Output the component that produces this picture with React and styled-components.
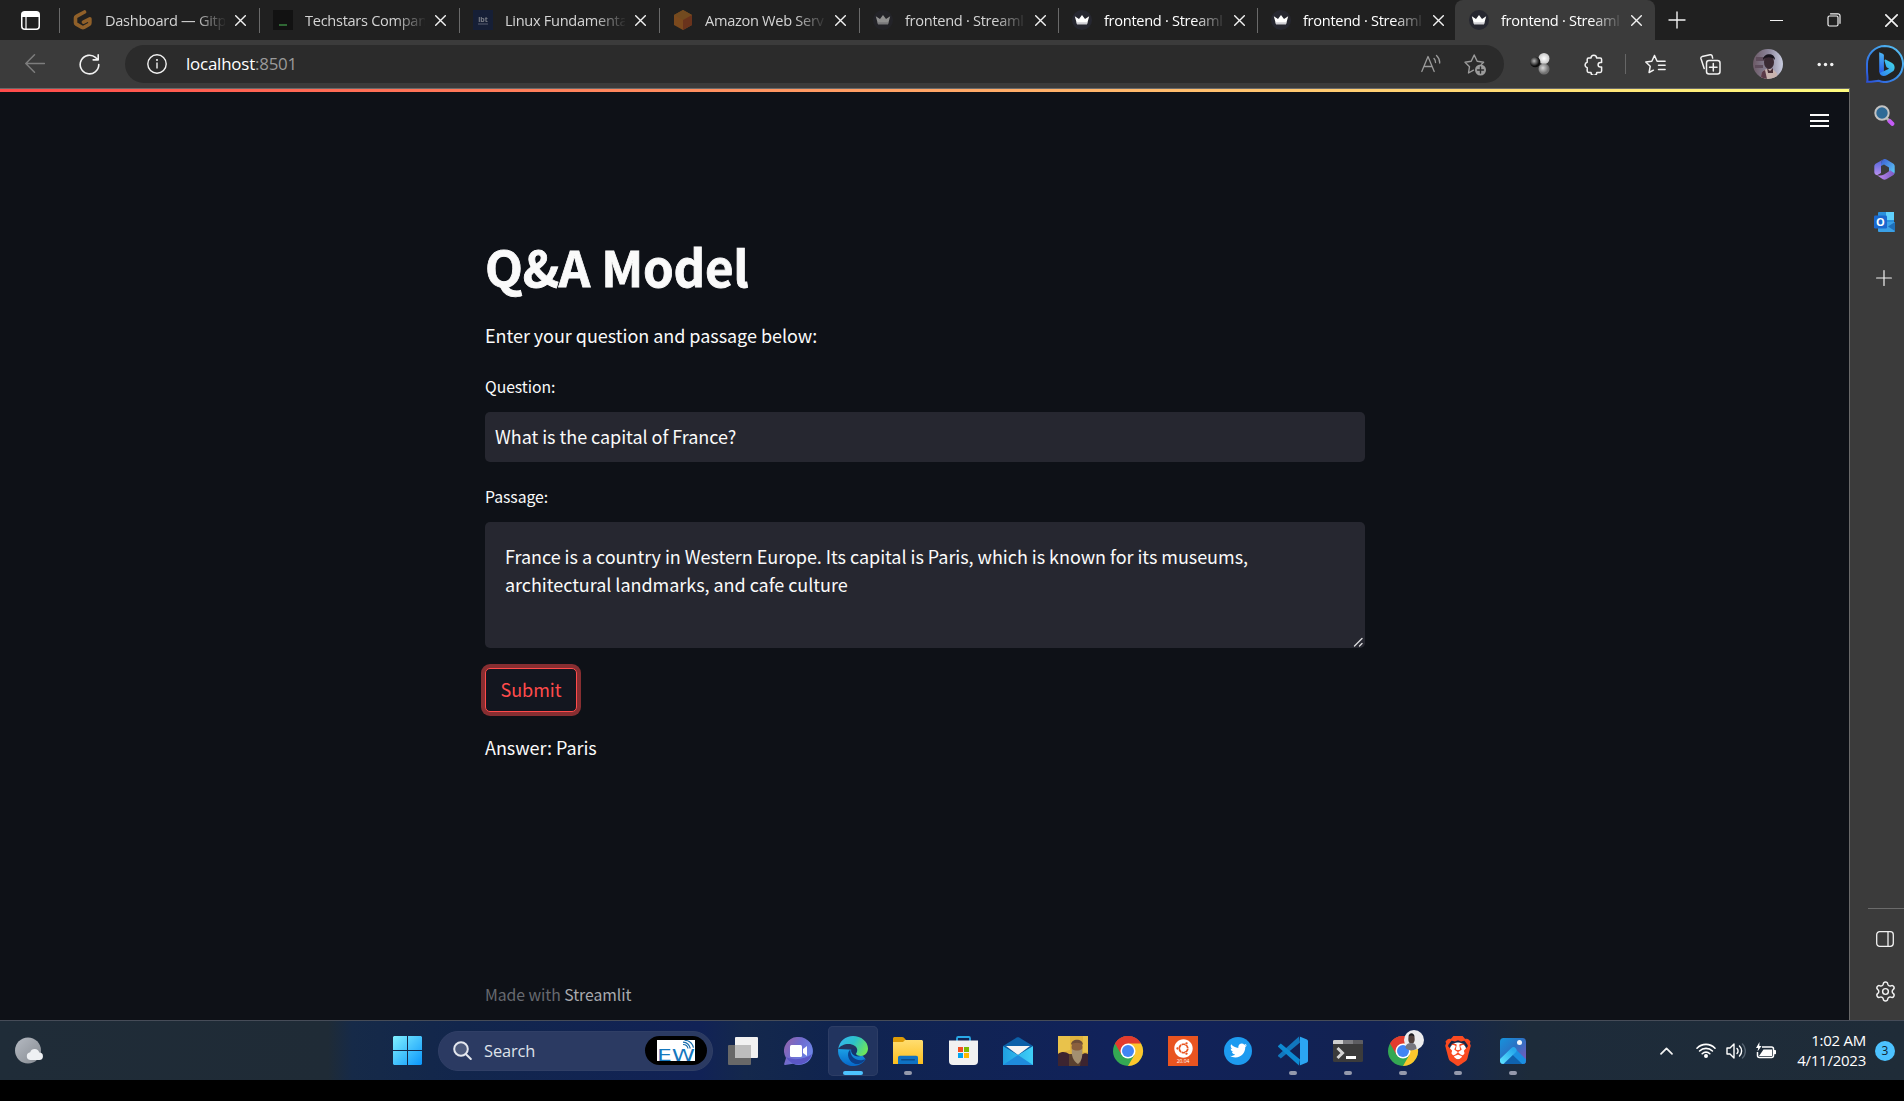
import React from "react";
import styled, { createGlobalStyle, css } from "styled-components";
import { Settings } from "lucide-react";
import { FaTwitter, FaUbuntu } from "react-icons/fa";
import { SiBrave } from "react-icons/si";

const GlobalStyle = createGlobalStyle`
  *, *::before, *::after { box-sizing: border-box; }
  html, body { margin: 0; background: #000; overflow: hidden; }
  svg { display: block; flex: none; }
`;

const uiFont = `"Open Sans", "Noto Sans", sans-serif`;
const pageFont = `"Noto Sans CJK SC", "Open Sans", sans-serif`;

const Desktop = styled.div`
  width: 1904px;
  height: 1101px;
  display: flex;
  flex-direction: column;
  background: #000;
  font-family: ${uiFont};
  overflow: hidden;
`;

/* ---------- Tab strip ---------- */
const TabStrip = styled.header`
  height: 40px;
  flex: none;
  display: flex;
  align-items: stretch;
  background: #202020;
  color: #fff;
`;
const TabActions = styled.div`
  width: 59px;
  flex: none;
  display: flex;
  align-items: center;
  justify-content: center;
  padding-left: 1px;
`;
const Tab = styled.div`
  width: ${(p) => (p.$narrow ? 199 : 200)}px;
  flex: none;
  display: flex;
  align-items: center;
  padding-left: 13px;
  border-radius: ${(p) => (p.$active ? "8px 8px 0 0" : 0)};
  background: ${(p) =>
    p.$active ? "#3b3b3b" : "linear-gradient(#6a6a6a, #6a6a6a) left 8px / 1px 25px no-repeat"};
  ${(p) =>
    p.$active &&
    css`
      margin-left: -1px;
    `}
`;
const TabIcon = styled.span`
  width: 20px;
  height: 20px;
  margin-left: 1px;
  opacity: ${(p) => (p.$dim ? 0.5 : 1)};
`;
const TabTitle = styled.span`
  width: 120px;
  margin-left: 12px;
  padding-bottom: 1px;
  font-size: 14.6px;
  letter-spacing: -0.3px;
  line-height: 20px;
  white-space: nowrap;
  color: ${(p) => (p.$dim ? "#d4d4d4" : "#fff")};
  mask-image: linear-gradient(90deg, #000 90px, transparent 122px);
`;
const TabClose = styled.span`
  margin-left: 10px;
  padding-top: 1px;
`;
const NewTab = styled.div`
  width: 44px;
  display: flex;
  align-items: center;
  justify-content: center;
`;
const WindowButtons = styled.div`
  margin-left: auto;
  display: flex;
`;
const WindowButton = styled.div`
  width: 57px;
  display: flex;
  align-items: center;
  justify-content: center;
  &:last-child {
    width: 58px;
    margin-right: -16px;
  }
`;

/* ---------- Toolbar ---------- */
const Toolbar = styled.div`
  height: 48px;
  flex: none;
  display: flex;
  align-items: center;
  background: #3b3b3b;
`;
const NavButton = styled.div`
  width: 55px;
  display: flex;
  justify-content: center;
`;
const NavButtons = styled.div`
  display: flex;
  flex: none;
  width: 125px;
  padding-left: 7px;
`;
const AddressBar = styled.div`
  width: 1379px;
  flex: none;
  height: 38px;
  border-radius: 19px;
  background: #2b2b2b;
  display: flex;
  align-items: center;
  padding: 0 17px 0 22px;
`;
const Url = styled.span`
  margin-left: 19px;
  font-size: 16.9px;
  letter-spacing: -0.2px;
  color: #fff;
  line-height: 24px;
  span {
    color: #9a9a9a;
  }
`;
const AddressActions = styled.div`
  margin-left: auto;
  display: flex;
  align-items: center;
  gap: 23px;
`;
const ToolbarActions = styled.div`
  flex: none;
  display: flex;
  align-items: center;
`;
const ToolbarSlot = styled.div`
  width: ${(p) => p.$w}px;
  flex: none;
  display: flex;
  justify-content: center;
`;
const ToolbarDivider = styled.div`
  width: 1px;
  height: 20px;
  background: #666;
`;

/* ---------- Body ---------- */
const BrowserBody = styled.div`
  height: 932px;
  flex: none;
  display: flex;
  background: #3b3b3b;
`;
const Page = styled.main`
  width: 1850px;
  background: #0e1117;
  border-top: 1px solid #696969;
  border-right: 1px solid #696969;
  display: flex;
  flex-direction: column;
  font-family: ${pageFont};
  letter-spacing: -0.04px;
  color: #fafafa;
`;
const Decoration = styled.div`
  height: 3px;
  flex: none;
  background: linear-gradient(90deg, #ff4b4b, #fffd80);
`;
const PageHeader = styled.div`
  height: 56px;
  flex: none;
  display: flex;
  justify-content: flex-end;
  padding: 22px 20px 0 0;
`;
const Menu = styled.div`
  width: 19px;
  height: 13px;
  border-top: 2px solid #fafafa;
  border-bottom: 2px solid #fafafa;
  display: flex;
  align-items: center;
  &::before {
    content: "";
    width: 19px;
    height: 2px;
    background: #fafafa;
  }
`;
const Block = styled.section`
  width: 880px;
  flex: 1;
  margin-left: 485px;
  padding-top: 85px;
  display: flex;
  flex-direction: column;
  align-items: stretch;
`;
const Title = styled.h1`
  margin: 0;
  font-size: 49.2px;
  line-height: 66px;
  font-weight: 700;
  letter-spacing: -0.2px;
  -webkit-text-stroke: 0.8px #fafafa;
`;
const Text = styled.p`
  margin: ${(p) => p.$mt}px 0 0;
  font-size: 18px;
  line-height: 28px;
`;
const Label = styled.label`
  margin-top: ${(p) => p.$mt}px;
  font-size: 15.75px;
  line-height: 24px;
`;
const Input = styled.input`
  margin: 13px 0 0;
  height: 50px;
  border: 0;
  outline: 0;
  border-radius: 5px;
  background: #262730;
  color: #fafafa;
  font: 18px/28px ${pageFont};
  letter-spacing: -0.04px;
  padding: 0 10px 2px;
`;
const AreaBox = styled.div`
  position: relative;
  margin-top: 13px;
  height: 126px;
  > svg {
    position: absolute;
    right: 2px;
    bottom: 1px;
  }
`;
const Area = styled.textarea`
  display: block;
  width: 880px;
  height: 126px;
  border: 0;
  outline: 0;
  resize: none;
  overflow: hidden;
  border-radius: 5px;
  background: #262730;
  color: #fafafa;
  font: 18px/28px ${pageFont};
  letter-spacing: -0.04px;
  padding: 20px;
`;
const Submit = styled.button`
  align-self: flex-start;
  margin-top: 20px;
  width: 92px;
  height: 44px;
  padding: 0 0 3px;
  border: 1px solid #ff4b4b;
  border-radius: 5px;
  background: #13161f;
  box-shadow: 0 0 0 4px rgba(255, 75, 75, 0.5);
  color: #ff4b4b;
  font: 18px/28px ${pageFont};
`;
const Footer = styled.footer`
  margin-top: auto;
  padding-bottom: 13px;
  font-size: 15.75px;
  line-height: 24px;
  color: #676a70;
  span {
    color: #a9abaf;
  }
`;

/* ---------- Side bar ---------- */
const SideBar = styled.aside`
  flex: 1;
  padding: 14px 0 3px 15px;
  display: flex;
  flex-direction: column;
`;
const SideSlot = styled.div`
  height: ${(p) => p.$h || 54}px;
  width: 38px;
  display: flex;
  align-items: center;
  justify-content: center;
`;
const SideBottom = styled.div`
  margin-top: auto;
  margin-left: 3px;
  border-top: 1px solid #6b6b6b;
  padding-top: 4px;
  > div {
    width: 34px;
  }
`;

/* ---------- Taskbar ---------- */
const Taskbar = styled.nav`
  height: 60px;
  flex: none;
  display: flex;
  align-items: center;
  border-top: 1px solid #464c58;
  background: linear-gradient(
    90deg,
    #1f2c38 0,
    #1f2b36 328px,
    #162a48 352px,
    #12264c 460px,
    #112256 700px,
    #14284c 745px,
    #10244f 830px,
    #11225a 1110px,
    #122252 1380px,
    #14264d 1440px,
    #1d2b3a 1530px,
    #1f2c38 1904px
  );
  color: #fff;
`;
const Weather = styled.div`
  width: 393px;
  padding-left: 15px;
`;
const SearchBox = styled.div`
  width: 275px;
  height: 40px;
  margin: 0 5px 0 16px;
  padding: 0 5px 0 14px;
  border-radius: 20px;
  background: #2b3a62;
  border: 1px solid #303f66;
  display: flex;
  align-items: center;
`;
const SearchLabel = styled.span`
  margin-left: 12px;
  font-size: 16.4px;
  letter-spacing: -0.1px;
  line-height: 24px;
  color: #dfe2ea;
`;
const SearchBadge = styled.div`
  margin-left: auto;
  width: 62px;
  height: 29px;
  border-radius: 15px;
  background: #000;
  display: flex;
  align-items: center;
  justify-content: center;
`;
const Apps = styled.div`
  display: flex;
  gap: 5px;
`;
const AppButton = styled.div`
  position: relative;
  width: 50px;
  height: 50px;
  border-radius: 5px;
  display: flex;
  align-items: center;
  justify-content: center;
  background: ${(p) => (p.$active ? "#22345f" : "transparent")};
  box-shadow: ${(p) => (p.$active ? "inset 0 0 0 1px #2d3d65" : "none")};
  &::after {
    content: "";
    position: absolute;
    bottom: 1px;
    left: 50%;
    display: ${(p) => (p.$active || p.$running ? "block" : "none")};
    width: ${(p) => (p.$active ? 20 : 8)}px;
    height: 4px;
    transform: translateX(-50%);
    border-radius: 2px;
    background: ${(p) => (p.$active ? "#4cc2ff" : "#9499ac")};
  }
`;
const Tray = styled.div`
  margin-left: auto;
  padding-right: 9px;
  display: flex;
  align-items: center;
`;
const TraySlot = styled.div`
  width: ${(p) => p.$w}px;
  display: flex;
  justify-content: center;
`;
const Clock = styled.div`
  width: 79px;
  text-align: right;
  font-size: 15px;
  letter-spacing: -0.25px;
  line-height: 20px;
  padding-bottom: 1px;
`;
const Badge = styled.div`
  margin-left: 9px;
  width: 20px;
  height: 20px;
  border-radius: 50%;
  background: #4cc2ff;
  color: #10242f;
  font-size: 12px;
  line-height: 19px;
  text-align: center;
`;

/* ---------- Icons ---------- */
const Line = ({ w = 20, h, c = "#f2f2f2", sw = 1.5, vb = "0 0 20 20", children }) => (
  <svg width={w} height={h || w} viewBox={vb} fill="none" stroke={c} strokeWidth={sw} strokeLinecap="round" strokeLinejoin="round">
    {children}
  </svg>
);

const Cross = ({ size = 11 }) => (
  <Line w={size} vb="0 0 11 11" sw={1.4}>
    <path d="M.7.7l9.6 9.6M10.3.7L.7 10.3" />
  </Line>
);

const GitpodIcon = () => (
  <svg width="20" height="20" viewBox="0 0 20 20" fill="none" stroke="#ffa033" strokeWidth="3.6" strokeLinejoin="round" strokeLinecap="round">
    <path d="M11.5 2L3.4 6.300c-.6.3-.9.8-.9 1.400v5c0 .6.3 1.100.8 1.400l5.700 3.300c.6.3 1.300.3 1.900 0l5.100-2.900c.6-.4.9-.9.9-1.500V8.800l-6.400 3.400" />
  </svg>
);
const TerminalFav = () => (
  <svg width="20" height="20" viewBox="0 0 20 20">
    <rect width="20" height="20" fill="#060606" />
    <rect x="6" y="14" width="8" height="2" fill="#3fae49" />
  </svg>
);
const IbtFav = () => (
  <svg width="20" height="20" viewBox="0 0 20 20">
    <rect width="20" height="20" fill="#0e1f4d" />
    <text x="10" y="12" textAnchor="middle" fontFamily="Open Sans" fontWeight="700" fontSize="7" fill="#cfd6e8">ibt</text>
    <rect x="5" y="13.500" width="10" height="1" fill="#8f9cc0" />
  </svg>
);
const AwsFav = () => (
  <svg width="20" height="20" viewBox="0 0 20 20">
    <path d="M10 0l9 5v10l-9 5-9-5V5z" fill="#d6721c" />
    <path d="M10 0l9 5-9 5-9-5z" fill="#c4741f" />
    <path d="M19 5v10l-9 5V10z" fill="#b4471a" />
  </svg>
);
const CrownFav = () => (
  <svg width="20" height="20" viewBox="0 0 20 20">
    <circle cx="10" cy="10" r="10" fill="#262730" />
    <path d="M2.800 6.200L7 9l3-4 3 4 4.200-2.800L15 14.300H5z" fill="#fff" />
    <path d="M4.500 12.300h11L15 14.300H5z" fill="#cfcfd4" />
  </svg>
);

const BingIcon = () => (
  <svg width="38" height="38" viewBox="0 0 38 38">
    <defs>
      <linearGradient id="bo" x1="1" y1="0" x2="0" y2="1">
        <stop offset="0" stopColor="#5cc8f5" />
        <stop offset=".5" stopColor="#3a8fe8" />
        <stop offset="1" stopColor="#2a4fd8" />
      </linearGradient>
      <linearGradient id="bs" x1="0" y1="0" x2="0" y2="1">
        <stop offset="0" stopColor="#4cb7f5" />
        <stop offset="1" stopColor="#2458e8" />
      </linearGradient>
      <linearGradient id="bb" x1="1" y1="0" x2="0" y2="1">
        <stop offset="0" stopColor="#45e0e8" />
        <stop offset="1" stopColor="#2d7cf0" />
      </linearGradient>
    </defs>
    <path d="M19 1a18 18 0 1 1-6.500 34.800C9.500 36 5 37 1.200 36.800 2 33 1 29 1 26V19A18 18 0 0 1 19 1z" fill="#232323" stroke="url(#bo)" strokeWidth="2" />
    <path d="M13.200 7.200l3.600 1.500c.7.300 1.100.9 1.100 1.600v15.200l-1 3.500c-2 .8-3.700-.8-3.700-2.800z" fill="url(#bs)" />
    <path d="M19.500 14.500l6.200 3.200c3 1.600 4 5.500 1.700 8.300l-6.300 4c-3 1.800-6.600 1.200-7.500-2l9.500-4.200-1.700-1c-.6-.3-1-.8-1.300-1.500l-1.500-5c-.4-1.200.2-2 .9-1.800z" fill="url(#bb)" />
  </svg>
);
const AvatarIcon = () => (
  <svg width="30" height="30" viewBox="0 0 30 30">
    <defs>
      <clipPath id="av"><circle cx="15" cy="15" r="15" /></clipPath>
      <linearGradient id="avb"><stop offset="0" stopColor="#6c5a66" /><stop offset=".5" stopColor="#8a8398" /><stop offset="1" stopColor="#c9cde0" /></linearGradient>
    </defs>
    <g clipPath="url(#av)">
      <rect width="30" height="30" fill="url(#avb)" />
      <path d="M3 8h9v4H3zM2 16h8v3H2z" fill="#5f4d5c" />
      <path d="M8 30c0-8 3-10 8-10s9 3 9 10z" fill="#c8b3ae" />
      <path d="M8 30c0-6 1-8 4-9l2 9z" fill="#5b3a48" />
      <ellipse cx="16" cy="13" rx="5" ry="7" fill="#3a2a33" />
      <path d="M10 11c0-7 12-8 12 0-2-3-9-4-12 0z" fill="#17131b" />
      <path d="M14 19l3 3 3-3v5h-5z" fill="#4a3038" />
    </g>
  </svg>
);
const BallsIcon = () => (
  <svg width="20" height="22" viewBox="0 0 20 22">
    <defs>
      <radialGradient id="b1"><stop offset="0" stopColor="#fff" /><stop offset="1" stopColor="#c9c9c9" /></radialGradient>
      <radialGradient id="b2" cx=".4" cy=".4"><stop offset="0" stopColor="#b5b5b5" /><stop offset="1" stopColor="#0d0d0d" /></radialGradient>
      <radialGradient id="b3" cx=".4" cy=".4"><stop offset="0" stopColor="#d8d8d8" /><stop offset="1" stopColor="#707070" /></radialGradient>
    </defs>
    <circle cx="14" cy="5.500" r="5.500" fill="url(#b1)" />
    <circle cx="5.200" cy="9" r="5.200" fill="url(#b2)" />
    <circle cx="14" cy="16" r="5.500" fill="url(#b3)" />
  </svg>
);

const SideSearchIcon = () => (
  <svg width="21" height="21" viewBox="0 0 21 21">
    <path d="M15.500 16l2.800 2.800" stroke="#c45cf5" strokeWidth="4.200" strokeLinecap="round" />
    <path d="M12.500 13l2 2" stroke="#b0b0b0" strokeWidth="2.500" />
    <circle cx="8" cy="8" r="6.700" fill="#2f6a96" stroke="#c3c3c3" strokeWidth="2" />
  </svg>
);
const M365Icon = () => (
  <svg width="21" height="21" viewBox="0 0 21 21">
    <defs>
      <linearGradient id="m1" x1="0" y1="0" x2="0" y2="1"><stop offset="0" stopColor="#4b63d8" /><stop offset="1" stopColor="#b88ff0" /></linearGradient>
      <linearGradient id="m2" x1="0" y1="0" x2="1" y2="1"><stop offset="0" stopColor="#3c5bd0" /><stop offset="1" stopColor="#5fd2fb" /></linearGradient>
      <linearGradient id="m3"><stop offset="0" stopColor="#c08af0" /><stop offset="1" stopColor="#7a5bc4" /></linearGradient>
    </defs>
    <path d="M10 0L2 4.600C1 5.200.3 6.200.3 7.300v6c0 1.500 1.200 2.800 2.700 2.900L7 14V5c0-2 1-4 3-5z" fill="url(#m1)" />
    <path d="M10 0c-2 1-3 3-3 5v2l3-1.500 5 3V13l4 2.800c1-.7 1.700-1.500 1.700-2.700v-6c0-1.100-.6-2.100-1.600-2.700L12.500.4C11.700 0 10.800-.1 10 0z" fill="url(#m2)" />
    <path d="M14 13l-4 2.500c-2 1.200-4.500 1.300-7 .7l5.800 4c1 .6 2.400.6 3.500 0l6.800-4c.7-.5 1.200-1.200 1.500-2l-4.600-3z" fill="url(#m3)" />
  </svg>
);
const OutlookIcon = () => (
  <svg width="21" height="21" viewBox="0 0 21 21">
    <rect x="4" y="0" width="16" height="16" rx="1" fill="#2a90dd" />
    <rect x="12" y="0" width="8" height="8" fill="#5fd0fb" />
    <path d="M4 10l17 0v9a1 1 0 0 1-1 1H5a1 1 0 0 1-1-1z" fill="#3aa0e6" />
    <path d="M21 10v9l-7-4.500z" fill="#1f6fb8" />
    <rect x="0" y="3.500" width="13" height="13" rx="1.200" fill="#1a68cf" />
    <text x="6.500" y="14" textAnchor="middle" fontFamily="Open Sans" fontWeight="700" fontSize="11" fill="#fff">O</text>
  </svg>
);

const WeatherIcon = () => (
  <svg width="28" height="27" viewBox="0 0 28 27">
    <defs>
      <linearGradient id="w1" x1="0" y1="0" x2="1" y2="1"><stop offset="0" stopColor="#b5bac2" /><stop offset="1" stopColor="#868b92" /></linearGradient>
    </defs>
    <circle cx="13" cy="13.500" r="13" fill="url(#w1)" />
    <path d="M15 23a3.900 3.900 0 0 1 .2-7.700 4.700 4.700 0 0 1 9 .3A3.700 3.700 0 0 1 24.300 23z" fill="#eef0f3" />
  </svg>
);
const WindowsIcon = () => (
  <svg width="29" height="29" viewBox="0 0 29 29">
    <defs>
      <linearGradient id="win" x1="0" y1="0" x2="1" y2="1"><stop offset="0" stopColor="#80f0ff" /><stop offset="1" stopColor="#0a96fb" /></linearGradient>
    </defs>
    <path d="M1 0h13v14H0V1zM15 0h13l1 1v13H15zM0 15h14v14H1l-1-1zM15 15h14v13l-1 1H15z" fill="url(#win)" />
  </svg>
);
const EwLogo = () => (
  <svg width="38" height="21" viewBox="0 0 38 21">
    <rect width="38" height="21" fill="#fff" />
    <text x="0" y="20.500" fontFamily="DejaVu Sans" fontSize="16" textLength="38" lengthAdjust="spacingAndGlyphs" fill="#1578be">EW</text>
    <path d="M26 4.500a5 5 0 0 1 5 4M26 2.200a8 8 0 0 1 7.300 6.300M27.500.2a10 10 0 0 1 9 7.500" fill="none" stroke="#1a6fae" strokeWidth="1.200" />
  </svg>
);
const TaskViewIcon = () => (
  <svg width="30" height="28" viewBox="0 0 30 28">
    <rect x="0" y="8" width="23" height="20" rx="1" fill="#686868" />
    <rect x="7" y="0" width="23" height="21" rx="1" fill="#f1f1f1" />
    <rect x="7" y="8" width="16" height="13" fill="#bdbdbd" />
  </svg>
);
const ChatIcon = () => (
  <svg width="29" height="28" viewBox="0 0 29 28">
    <defs>
      <linearGradient id="ch" x1="0" y1="0" x2="1" y2=".6"><stop offset="0" stopColor="#9a62a4" /><stop offset=".5" stopColor="#6f6ccf" /><stop offset="1" stopColor="#6d87ea" /></linearGradient>
    </defs>
    <path d="M15 0a14 14 0 1 1-6 26.700L1.200 28c-.7.100-1.300-.5-1-1.200L2 21A14 14 0 0 1 15 0z" fill="url(#ch)" />
    <path d="M2 20a14 14 0 0 0 26-3c-7 5-18 7-26 3z" fill="#5b57c6" />
    <rect x="6" y="8" width="12" height="12" rx="1.500" fill="#fff" />
    <path d="M19 12l4-3v10l-4-3z" fill="#fff" />
  </svg>
);
const EdgeIcon = () => (
  <svg width="30" height="30" viewBox="0 0 30 30">
    <defs>
      <linearGradient id="e1" x1="0" y1=".2" x2="1" y2=".6"><stop offset="0" stopColor="#35b5f1" /><stop offset=".5" stopColor="#2cc2c8" /><stop offset="1" stopColor="#6ee75a" /></linearGradient>
      <linearGradient id="e2" x1="0" y1="0" x2="0" y2="1"><stop offset="0" stopColor="#1ba0e6" /><stop offset="1" stopColor="#0667c9" /></linearGradient>
    </defs>
    <path d="M.2 13A15 15 0 0 0 18 29.700c4-.8 7.500-3 9.600-6.500L20 14z" fill="url(#e2)" />
    <path d="M.2 13C1.500 5 7.500 0 15 0c8 0 15 5.500 15 12.500 0 4.500-3.300 7.500-7.500 7.500-3 0-4.500-1.200-4.500-2.200 0-.9 1.200-1.300 1.200-3.800C19.200 10.500 15 8 10.500 8 6 8 2 10 .2 13z" fill="url(#e1)" />
    <path d="M12.500 13.500c-2.500 1.500-3 5-2 8 1.600 4.700 6 7 10 6.500 3-.6 5.500-2.600 7.500-5.300-3 1.800-7 1.900-10 .6-3.500-1.600-6-5.300-5.500-9.800z" fill="#0c3f8a" />
    <path d="M19.200 14c0 2.500-1.200 2.900-1.200 3.800 0 1 1.500 2.200 4.500 2.200-2 1-6.500.5-8.500-2.500-1.200-2-1-3.500-.5-4.500 1.800-1.500 5.400-1 5.700 1z" fill="#16336b" />
  </svg>
);
const FolderIcon = () => (
  <svg width="30" height="27" viewBox="0 0 30 27">
    <defs><linearGradient id="fo" x1="0" y1="0" x2="0" y2="1"><stop offset="0" stopColor="#ffdd70" /><stop offset="1" stopColor="#fcbf1e" /></linearGradient></defs>
    <path d="M0 1.500C0 .7.700 0 1.500 0H9c1 0 1.700.4 2.200 1L13 3v7H0z" fill="#dd9b07" />
    <path d="M0 5h10l2-2h16.500c.8 0 1.500.7 1.500 1.500V27H0z" fill="url(#fo)" />
    <path d="M5 27v-6.500c0-1 .8-1.800 1.800-1.800h16.400c1 0 1.800.8 1.800 1.800V27z" fill="#0f72c4" />
    <rect x="8" y="22" width="14" height="1.500" rx=".7" fill="#0a4d8c" />
  </svg>
);
const StoreIcon = () => (
  <svg width="29" height="29" viewBox="0 0 29 29">
    <path d="M8 6V2.200C8 1.500 8.500 1 9.200 1h10.600c.7 0 1.200.5 1.200 1.200V6" fill="none" stroke="#29a9e8" strokeWidth="1.800" />
    <path d="M0 4.500h29V25a4 4 0 0 1-4 4H4a4 4 0 0 1-4-4z" fill="#f1f1f1" />
    <rect x="9" y="11" width="5" height="5" fill="#f25022" />
    <rect x="15" y="11" width="5" height="5" fill="#7fba00" />
    <rect x="9" y="17" width="5" height="5" fill="#00a4ef" />
    <rect x="15" y="17" width="5" height="5" fill="#ffb900" />
  </svg>
);
const MailIcon = () => (
  <svg width="30" height="28" viewBox="0 0 30 28">
    <defs><linearGradient id="ma"><stop offset="0" stopColor="#1f9fe0" /><stop offset="1" stopColor="#3fd0f8" /></linearGradient></defs>
    <path d="M0 9L13.800.5c.7-.4 1.700-.4 2.400 0L30 9l-15 9z" fill="#0c60a8" />
    <path d="M3 9h24l-12 9z" fill="#f4f4f4" />
    <path d="M0 9l15 9 15-9v19H0z" fill="url(#ma)" />
    <path d="M0 28h30L15 18z" fill="#1f8bdc" />
  </svg>
);
const PortraitIcon = () => (
  <svg width="30" height="30" viewBox="0 0 30 30">
    <rect width="30" height="30" fill="#dfb23e" />
    <path d="M0 0h12v14L0 17zM25 0h5v16h-5z" fill="#e9c24b" />
    <path d="M0 18c4-3 8-2 11 0l2 12H0zM23 19c3-2 5-2 7-1v12h-9z" fill="#3c2430" />
    <path d="M11 18h13l-2 12H11z" fill="#59402f" />
    <ellipse cx="19" cy="11" rx="5.500" ry="7" fill="#8a5f3e" />
    <path d="M13 9c0-7 12-7 12 0-2-3-10-3-12 0z" fill="#6d4d38" />
    <path d="M14 13c3 2 7 2 10 0 1 6 0 12-4 15-5-3-7-9-6-15z" fill="#a39071" />
  </svg>
);
const ChromeIcon = ({ avatar }) => (
  <svg width="30" height="30" viewBox="0 0 30 30" overflow="visible">
    <circle cx="15" cy="15" r="15" fill="#34a853" />
    <path d="M15 15L2 7.500A15 15 0 0 1 28 7.500z" fill="#e33b2e" />
    <path d="M2 7.500A15 15 0 0 1 28 7.500H15L8.500 18.800z" fill="#e33b2e" />
    <path d="M15 7.500h13A15 15 0 0 1 15 30l6.500-11.200z" fill="#fcc62c" />
    <circle cx="15" cy="15" r="7.500" fill="#fff" />
    <circle cx="15" cy="15" r="6" fill="#4285f4" />
    {avatar && (
      <g>
        <circle cx="26" cy="4" r="10" fill="#ececee" />
        <ellipse cx="23.500" cy="3" rx="3.200" ry="4.500" fill="#51413d" />
        <path d="M17.500 12c0-4 3-5 6-5s5 2 5 6c-4 2-8 2-11-1z" fill="#77777f" />
        <path d="M20.500 1c0-5 6-5 6 0-1-2-5-2-6 0z" fill="#1b1b1e" />
      </g>
    )}
  </svg>
);
const Square = styled.div`
  width: 30px;
  height: 30px;
  background: #e95420;
  color: #fff;
  display: flex;
  flex-direction: column;
  align-items: center;
  padding-top: 3px;
  font-size: 5px;
  line-height: 7px;
  svg {
    width: 19px;
    height: 19px;
  }
`;
const Bird = styled.div`
  width: 28px;
  height: 28px;
  border-radius: 50%;
  background: #1d9bf0;
  display: flex;
  align-items: center;
  justify-content: center;
`;
const CodeIcon = () => (
  <svg width="30" height="30" viewBox="0 0 30 30">
    <path d="M22 6.500L2.800 22.500.3 20.300c-.4-.4-.4-1 0-1.400L21 .5z" fill="#1177bd" />
    <path d="M22 23.500L2.800 7.500.3 9.700c-.4.400-.4 1 0 1.400L21 29.500z" fill="#0d8ad2" />
    <path d="M21 .3L29 3.600c.6.300 1 .9 1 1.500v19.800c0 .6-.4 1.200-1 1.500l-8 3.300c1 0 1-.8 1-1.200v-27c0-.4 0-1.200-1-1.200z" fill="#2ba5f2" />
  </svg>
);
const TerminalIcon = () => (
  <svg width="30" height="22" viewBox="0 0 30 22">
    <rect width="30" height="22" rx="1.500" fill="#3b3b3b" />
    <path d="M1.500 0h27A1.500 1.500 0 0 1 30 1.500V4H0V1.500A1.500 1.500 0 0 1 1.500 0z" fill="#7c7c80" />
    <path d="M1.500 0H10v4H0V1.500A1.500 1.500 0 0 1 1.500 0z" fill="#cfcfcf" />
    <path d="M20 0h8.500A1.500 1.500 0 0 1 30 1.500V4H20z" fill="#5d5d61" />
    <path d="M4.500 8l5 5-5 5" fill="none" stroke="#d5d5d5" strokeWidth="3" />
    <rect x="13" y="16" width="10" height="3" fill="#fff" />
  </svg>
);
const BraveBox = styled.div`
  width: 26px;
  height: 30px;
  display: flex;
  align-items: center;
  justify-content: center;
  background: radial-gradient(circle, #fff 8px, transparent 9px);
  svg {
    width: 30px;
    height: 30px;
    color: #fb4a20;
  }
`;
const PhotosIcon = () => (
  <svg width="26" height="26" viewBox="0 0 26 26">
    <defs>
      <linearGradient id="ph" x1="0" y1="0" x2="1" y2="1"><stop offset="0" stopColor="#1593dc" /><stop offset=".45" stopColor="#2a72c4" /><stop offset="1" stopColor="#8a55b8" /></linearGradient>
      <linearGradient id="pm" x1="1" y1="0" x2="0" y2="1"><stop offset="0" stopColor="#26a9ec" /><stop offset="1" stopColor="#5fe4ff" /></linearGradient>
      <clipPath id="pc"><rect width="26" height="26" rx="3.500" /></clipPath>
    </defs>
    <g clipPath="url(#pc)">
      <rect width="26" height="26" fill="url(#ph)" />
      <path d="M4 26l10-11L26 26z" fill="#0f62ae" />
      <path d="M13 13l13 12.500" stroke="#1b8fe0" strokeWidth="6" fill="none" />
      <path d="M0 25L13.500 12.300" stroke="url(#pm)" strokeWidth="6" strokeLinecap="round" fill="none" />
      <circle cx="19.500" cy="4.500" r="2.500" fill="#eef4fb" />
    </g>
  </svg>
);

const tabs = [
  { title: "Dashboard — Gitp", icon: GitpodIcon, dim: true },
  { title: "Techstars Compan", icon: TerminalFav, dim: true },
  { title: "Linux Fundamenta", icon: IbtFav, dim: true },
  { title: "Amazon Web Serv", icon: AwsFav, dim: true },
  { title: "frontend · Streaml", icon: CrownFav, dim: true, narrow: true },
  { title: "frontend · Streaml", icon: CrownFav, narrow: true },
  { title: "frontend · Streaml", icon: CrownFav, narrow: true },
  { title: "frontend · Streaml", icon: CrownFav, active: true },
];

const apps = [
  { icon: <TaskViewIcon /> },
  { icon: <ChatIcon /> },
  { icon: <EdgeIcon />, active: true },
  { icon: <FolderIcon />, running: true },
  { icon: <StoreIcon /> },
  { icon: <MailIcon /> },
  { icon: <PortraitIcon /> },
  { icon: <ChromeIcon /> },
  { icon: <Square><FaUbuntu />20.04</Square> },
  { icon: <Bird><FaTwitter size={17} color="#fff" /></Bird> },
  { icon: <CodeIcon />, running: true },
  { icon: <TerminalIcon />, running: true },
  { icon: <ChromeIcon avatar />, running: true },
  { icon: <BraveBox><SiBrave /></BraveBox>, running: true },
  { icon: <PhotosIcon />, running: true },
];

export default function App() {
  return (
    <Desktop>
      <GlobalStyle />
      <TabStrip>
        <TabActions>
          <svg width="19" height="19" viewBox="0 0 19 19">
            <rect x=".75" y=".75" width="17.500" height="17.500" rx="3" fill="none" stroke="#fff" strokeWidth="1.500" />
            <path d="M1 3a2 2 0 0 1 2-2h13a2 2 0 0 1 2 2v3H1z" fill="#fff" />
            <path d="M5 5v13" stroke="#fff" strokeWidth="1.200" />
          </svg>
        </TabActions>
        {tabs.map(({ title, icon: Icon, dim, active, narrow }, i) => (
          <Tab key={i} $active={active} $narrow={narrow}>
            <TabIcon $dim={dim}><Icon /></TabIcon>
            <TabTitle $dim={dim}>{title}</TabTitle>
            <TabClose><Cross /></TabClose>
          </Tab>
        ))}
        <NewTab>
          <Line w={18} vb="0 0 18 18" sw={1.4}><path d="M9 1v16M1 9h16" /></Line>
        </NewTab>
        <WindowButtons>
          <WindowButton><Line w={13} vb="0 0 13 13" sw={1.2}><path d="M0 6.500h13" /></Line></WindowButton>
          <WindowButton>
            <Line w={14} vb="0 0 14 14" sw={1.2}>
              <rect x="1" y="3" width="10" height="10" rx="1.500" />
              <path d="M3.500.800h7.500a2 2 0 0 1 2 2v7.500" />
            </Line>
          </WindowButton>
          <WindowButton><Cross size={13} /></WindowButton>
        </WindowButtons>
      </TabStrip>

      <Toolbar>
        <NavButtons>
          <NavButton>
            <Line w={20} c="#7d7d7d" sw={1.5}><path d="M19.500 9.500H.800M9.500.800L.800 9.500l8.700 8.700" /></Line>
          </NavButton>
          <NavButton>
            <Line w={21} vb="0 0 21 21" sw={1.6}>
              <path d="M19.800 10.500a9.300 9.300 0 1 1-3-6.800l2.200 2.200M19.200.900v5h-5" />
            </Line>
          </NavButton>
        </NavButtons>
        <AddressBar>
          <Line w={20} sw={1.4}>
            <circle cx="10" cy="10" r="9.200" />
            <path d="M10 9v5" />
            <circle cx="10" cy="6" r=".4" />
          </Line>
          <Url>localhost<span>:8501</span></Url>
          <AddressActions>
            <Line w={20} c="#9b9b9b" sw={1.3}>
              <path d="M.8 17.500L7 2.500l6.200 15M3 12.500h8M13 4.500a5.500 5.500 0 0 1 1.500 4M15.500 1.500a10 10 0 0 1 3.200 7.500" />
            </Line>
            <Line w={23} vb="0 0 23 23" c="#9b9b9b" sw={1.4}>
              <path d="M9.500 17.200L4.500 20l1-6.300L1 9.200l6.200-.9L10.200 2l3 6.300 6.400.9-2.100 2" />
              <circle cx="16.500" cy="17" r="5.500" fill="#9b9b9b" stroke="none" />
              <path d="M16.500 14v6M13.500 17h6" stroke="#2b2b2b" />
            </Line>
          </AddressActions>
        </AddressBar>
        <ToolbarActions>
          <ToolbarSlot $w={71}><BallsIcon /></ToolbarSlot>
          <ToolbarSlot $w={39}>
            <Line w={21} vb="0 0 21 21">
              <path d="M7 4a2.800 2.800 0 0 1 5.600 0h3.600c.8 0 1.400.6 1.400 1.400v3.100h-1.200a2.300 2.300 0 0 0 0 4.600h1.200v4c0 .8-.6 1.400-1.400 1.400h-3.400a2.800 2.800 0 0 1-5.800 0H4.600c-.8 0-1.400-.6-1.400-1.400v-3.300a2.900 2.900 0 0 1 0-5.600V5.400c0-.8.600-1.400 1.400-1.400z" />
            </Line>
          </ToolbarSlot>
          <ToolbarSlot $w={22}><ToolbarDivider /></ToolbarSlot>
          <ToolbarSlot $w={38}>
            <Line w={21} vb="0 0 21 21">
              <path d="M9.500 1.500l-2.700 5.700-6 .8 4.400 4.300-1.100 6.200 4.300-2.300M9.500 1.500l2.600 5.700h8M13.500 11.300h6.600M13.500 15.500h6.600" />
            </Line>
          </ToolbarSlot>
          <ToolbarSlot $w={72}>
            <Line w={21} vb="0 0 21 21">
              <path d="M4.200 14.500L1 4.800c-.3-1 .2-1.900 1.100-2.200L10 .8c1-.2 1.900.4 2.200 1.300l.4 2" />
              <rect x="6.500" y="6.500" width="13.500" height="13.500" rx="2.500" />
              <path d="M13.300 9.500v7.500M9.500 13.300H17" />
            </Line>
          </ToolbarSlot>
          <ToolbarSlot $w={44}><AvatarIcon /></ToolbarSlot>
          <ToolbarSlot $w={70}>
            <svg width="17" height="5" viewBox="0 0 17 5" fill="#f2f2f2">
              <circle cx="2.200" cy="2.500" r="1.700" /><circle cx="8.500" cy="2.500" r="1.700" /><circle cx="14.800" cy="2.500" r="1.700" />
            </svg>
          </ToolbarSlot>
          <ToolbarSlot $w={50}><BingIcon /></ToolbarSlot>
        </ToolbarActions>
      </Toolbar>

      <BrowserBody>
        <Page>
          <Decoration />
          <PageHeader><Menu /></PageHeader>
          <Block>
            <Title>Q&amp;A Model</Title>
            <Text $mt={22}>Enter your question and passage below:</Text>
            <Label $mt={26}>Question:</Label>
            <Input readOnly value="What is the capital of France?" />
            <Label $mt={23}>Passage:</Label>
            <AreaBox>
              <Area readOnly value={"France is a country in Western Europe. Its capital is Paris, which is known for its museums,\narchitectural landmarks, and cafe culture"} />
              <Line w={10} vb="0 0 10 10" c="#d8d8da" sw={1.4}><path d="M1.500 9L9 1.500M6.500 9L9 6.500" /></Line>
            </AreaBox>
            <Submit>Submit</Submit>
            <Text $mt={21}>Answer: Paris</Text>
            <Footer>Made with <span>Streamlit</span></Footer>
          </Block>
        </Page>
        <SideBar>
          <SideSlot $h={27}><SideSearchIcon /></SideSlot>
          <SideSlot $h={80}><M365Icon /></SideSlot>
          <SideSlot $h={27}><OutlookIcon /></SideSlot>
          <SideSlot $h={84}>
            <Line w={16} vb="0 0 16 16" sw={1.2}><path d="M8 .6v14.800M.6 8h14.800" /></Line>
          </SideSlot>
          <SideBottom>
            <SideSlot $h={52}>
              <Line w={18} h={16} vb="0 0 18 16" sw={1.3}>
                <rect x=".7" y=".7" width="16.600" height="14.600" rx="3" />
                <path d="M12 1v14" />
              </Line>
            </SideSlot>
            <SideSlot $h={52}><Settings size={23} color="#f2f2f2" strokeWidth={1.5} /></SideSlot>
          </SideBottom>
        </SideBar>
      </BrowserBody>

      <Taskbar>
        <Weather><WeatherIcon /></Weather>
        <WindowsIcon />
        <SearchBox>
          <Line w={19} vb="0 0 19 19" c="#e4e7ee" sw={2}>
            <circle cx="8" cy="8" r="6.800" fill="#4d5a7c" />
            <path d="M13 13.200l4.800 4.800" />
          </Line>
          <SearchLabel>Search</SearchLabel>
          <SearchBadge><EwLogo /></SearchBadge>
        </SearchBox>
        <Apps>
          {apps.map((a, i) => (
            <AppButton key={i} $active={a.active} $running={a.running}>{a.icon}</AppButton>
          ))}
        </Apps>
        <Tray>
          <TraySlot $w={38}>
            <Line w={13} h={8} vb="0 0 13 8" sw={1.7}><path d="M1 6.800l5.500-5.500L12 6.800" /></Line>
          </TraySlot>
          <TraySlot $w={42}>
            <Line w={20} h={15} vb="0 0 20 15" sw={1.6} c="#fff">
              <path d="M1 5.200a12.600 12.600 0 0 1 18 0M3.600 8a9 9 0 0 1 12.800 0M6.200 10.700a5.300 5.300 0 0 1 7.600 0" />
              <circle cx="10" cy="13" r="1.200" fill="#fff" />
            </Line>
          </TraySlot>
          <TraySlot $w={18}>
            <Line w={20} h={18} vb="0 0 20 18" sw={1.4} c="#fff">
              <path d="M1 6h3l4-4v14l-4-4H1zM11 6.500a3.500 3.500 0 0 1 0 5M13.500 4a7 7 0 0 1 0 10" />
              <path d="M16.500 2a10 10 0 0 1 0 14" stroke="#566370" />
            </Line>
          </TraySlot>
          <TraySlot $w={42}>
            <svg width="20" height="18" viewBox="0 0 20 18">
              <path d="M6 5h9.500A2 2 0 0 1 17.500 7v6.500a2 2 0 0 1-2 2h-12a2 2 0 0 1-2-2V10" fill="none" stroke="#fff" strokeWidth="1.500" />
              <path d="M3 14l4.500-6.500H16V14zM18 8h1.200a.8.800 0 0 1 .8.800v2.600a.8.800 0 0 1-.8.800H18zM3.500 0L0 6h2.200L1.500 9.500 5.500 4H3.300z" fill="#fff" />
            </svg>
          </TraySlot>
          <Clock>1:02 AM<br />4/11/2023</Clock>
          <Badge>3</Badge>
        </Tray>
      </Taskbar>
    </Desktop>
  );
}
